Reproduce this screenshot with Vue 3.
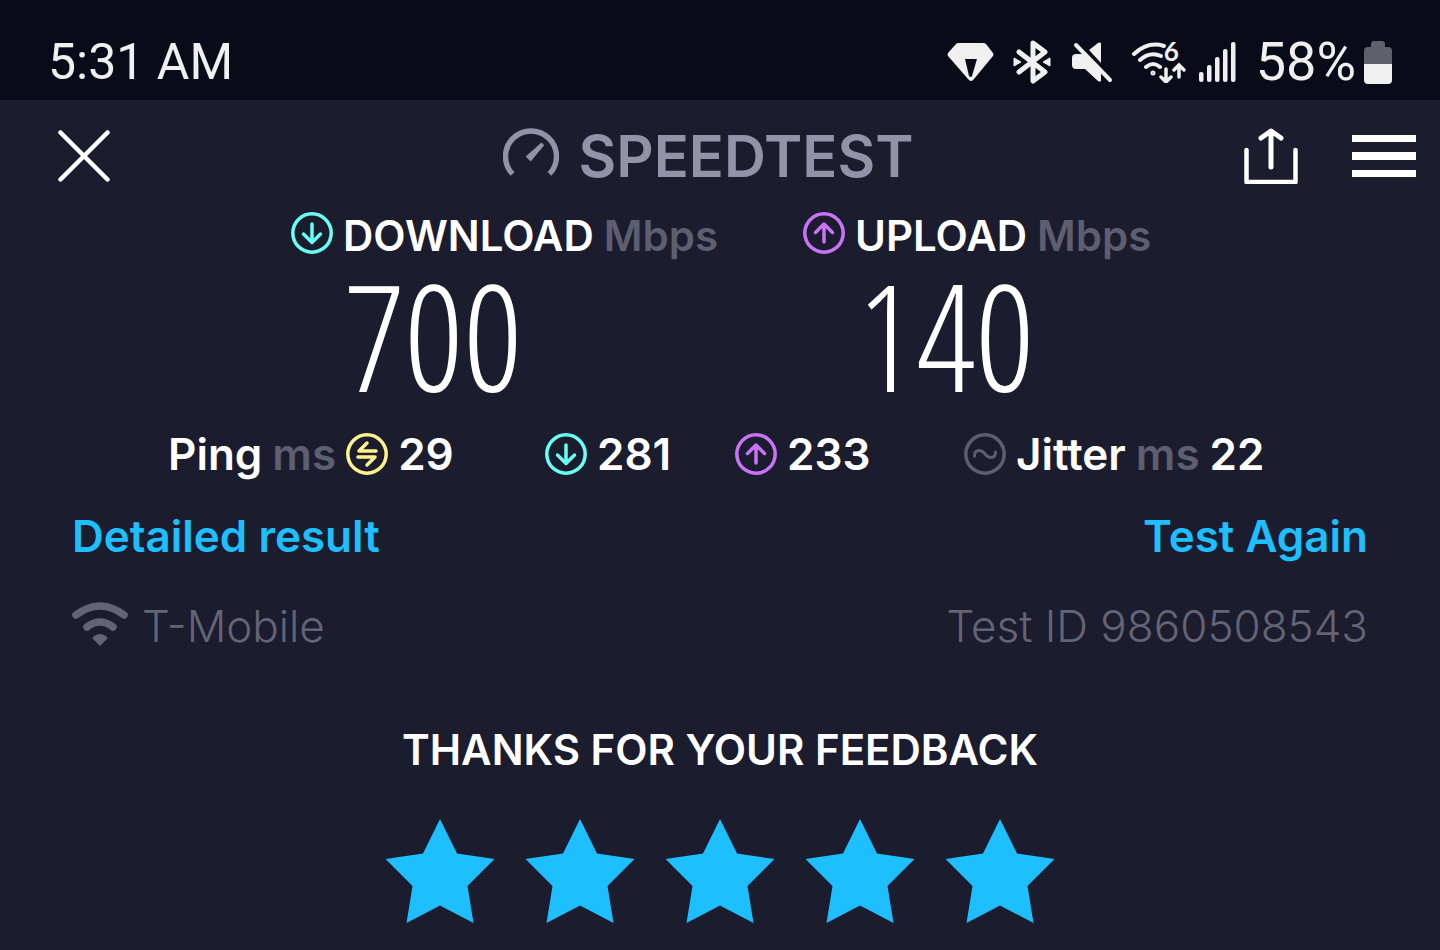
<script setup>
import { ref } from 'vue'

const rating = ref(5)

const results = [
  { label: 'DOWNLOAD', unit: 'Mbps', value: 700, dir: 'down' },
  { label: 'UPLOAD', unit: 'Mbps', value: 140, dir: 'up' },
]

const bars = [
  { x: 0, y: 31 },
  { x: 8, y: 24 },
  { x: 16, y: 16 },
  { x: 24, y: 8 },
  { x: 32, y: 1 },
]
</script>

<template>
  <div class="screen">
    <div class="status">
      <span class="clock">5:31 AM</span>
      <div class="tray">
        <!-- vpn / gem -->
        <svg class="gem" width="48" height="42" viewBox="0 0 48 42">
          <path d="M12 2h24q2 0 3 1l7 9q1 2 0 3L27 38q-3 4-6 0L1 15q-1-1 0-3l8-9q1-1 3-1z" fill="#f0f0f0" />
          <path d="M18 18h12l-5 17q-1 2-3 0z" fill="#090b18" />
        </svg>
        <svg class="bt" width="38" height="44" viewBox="0 0 38 44">
          <path d="M6 12l26 20-12 9V3l12 9L6 32" fill="none" stroke="#f0f0f0" stroke-width="5" stroke-linejoin="round" stroke-linecap="round" />
          <path d="M1 18l7 4-7 4zM37 18l-7 4 7 4z" fill="#f0f0f0" stroke="#f0f0f0" stroke-linejoin="round" />
        </svg>
        <svg class="mute" width="42" height="42" viewBox="0 0 42 42">
          <path d="M30 2v20L18 9l9-7q2-1 3 0zM5 13h8l17 17v10q-1 1-3 0L14 28H5q-4 0-4-4v-7q0-4 4-4z" fill="#f0f0f0" />
          <path d="M8 2l34 36" stroke="#090b18" stroke-width="3" />
          <path d="M5 4l34 35" stroke="#f0f0f0" stroke-width="4" stroke-linecap="round" />
        </svg>
        <div class="wifi6">
          <svg width="56" height="42" viewBox="0 0 56 42" fill="none" stroke="#f0f0f0" stroke-width="4" stroke-linecap="round">
            <path d="M3 13Q17 0 33 5M9 19q10-9 21-4M15 26q7-6 14 0" />
            <circle cx="22" cy="32" r="1" stroke-width="3" />
            <path d="M35 28v12M30 36l5 5 5-5M48 36V25M43 29l5-5 5 5" stroke-width="3.5" />
          </svg>
          <span class="six">6</span>
        </div>
        <svg class="signal" width="37" height="42" viewBox="0 0 37 42">
          <rect v-for="b in bars" :key="b.x" :x="b.x" :y="b.y" width="4.5" :height="41 - b.y" rx="2" fill="#f0f0f0" />
        </svg>
        <span class="percent">58%</span>
        <svg class="battery" width="28" height="43" viewBox="0 0 28 43">
          <path d="M7 3q0-3 3-3h8q3 0 3 3v3h3q4 0 4 4v13H0V10q0-4 4-4h3z" fill="#5f606c" />
          <path d="M0 23h28v16q0 4-4 4H4q-4 0-4-4z" fill="#f0f0f0" />
        </svg>
      </div>
    </div>

    <header class="bar">
      <button class="close" aria-label="Close">
        <svg width="52" height="52" viewBox="0 0 52 52">
          <path d="M2.5 2.5l47 47M49.5 2.5l-47 47" stroke="#fff" stroke-width="4.5" stroke-linecap="round" />
        </svg>
      </button>
      <div class="logo">
        <svg width="56" height="56" viewBox="0 0 56 56">
          <path d="M9.500 46A25.500 25.500 0 1 1 46.500 46" fill="none" stroke="#9293a8" stroke-width="5.400" />
          <path d="M38.500 14.500l2.700 2.700-13.500 16.300-5-5z" fill="#9293a8" />
        </svg>
        <h1>SPEEDTEST</h1>
      </div>
      <div class="actions">
        <button aria-label="Share">
          <svg width="54" height="56" viewBox="0 0 54 56" fill="none" stroke="#fff" stroke-width="5" stroke-linecap="round" stroke-linejoin="round">
            <path d="M2.500 22v32h49V22" stroke-width="4.500" />
            <path d="M27 39V3M17 10l10-7 10 7" />
          </svg>
        </button>
        <button aria-label="Menu">
          <svg width="64" height="42" viewBox="0 0 64 42" fill="#fff">
            <path d="M0 0h64v7H0zM0 17h64v8H0zM0 35h64v7H0z" />
          </svg>
        </button>
      </div>
    </header>

    <main>
      <section class="results">
        <div v-for="r in results" :key="r.label" class="result">
          <h2>
            <svg class="ring" :class="r.dir" viewBox="0 0 42 42">
              <circle cx="21" cy="21" r="19.2" />
              <path v-if="r.dir === 'down'" d="M21 12v18M12.5 22l8.5 8.5 8.5-8.5" />
              <path v-else d="M21 30V12M12.5 20.5l8.5-8.5 8.5 8.5" />
            </svg>
            {{ r.label }}
            <span class="unit">{{ r.unit }}</span>
          </h2>
          <p class="value">{{ r.value }}</p>
        </div>
      </section>

      <section class="latency">
        <div class="stat">
          <span>Ping</span>
          <span class="unit">ms</span>
          <svg class="ring idle" viewBox="0 0 42 42">
            <circle cx="21" cy="21" r="19.2" />
            <path d="M30 18H13l8-8M12 24h17l-8 8" />
          </svg>
          <span>29</span>
        </div>
        <div class="stat">
          <svg class="ring down" viewBox="0 0 42 42">
            <circle cx="21" cy="21" r="19.2" />
            <path d="M21 12v18M12.5 22l8.5 8.5 8.5-8.5" />
          </svg>
          <span>281</span>
        </div>
        <div class="stat">
          <svg class="ring up" viewBox="0 0 42 42">
            <circle cx="21" cy="21" r="19.2" />
            <path d="M21 30V12M12.5 20.5l8.5-8.5 8.5 8.5" />
          </svg>
          <span>233</span>
        </div>
        <div class="stat">
          <svg class="ring jitter" viewBox="0 0 42 42">
            <circle cx="21" cy="21" r="19.2" />
            <path d="M10.5 23c0-7 7-7 10.500-2s10.500 5 10.500-2" stroke-width="3" />
          </svg>
          <span>Jitter</span>
          <span class="unit">ms</span>
          <span>22</span>
        </div>
      </section>

      <nav class="row links">
        <a href="#details">Detailed result</a>
        <a href="#again">Test Again</a>
      </nav>

      <div class="row meta">
        <span class="provider">
          <svg width="56" height="48" viewBox="0 0 56 48">
            <path d="M4 13Q28-5 52 13M15 25q13-10 26 0" fill="none" stroke="#636476" stroke-width="7.500" stroke-linecap="round" />
            <path d="M21 35q7-6 14 0 1 1 0 2l-6 6q-1 1-2 0l-6-6q-1-1 0-2z" fill="#636476" />
          </svg>
          T-Mobile
        </span>
        <span>Test ID 9860508543</span>
      </div>

      <section class="feedback">
        <h2>THANKS FOR YOUR FEEDBACK</h2>
        <div class="stars">
          <button v-for="n in 5" :key="n" :class="{ on: n <= rating }" :aria-label="`${n} stars`" @click="rating = n">
            <svg width="110" height="104" viewBox="0 0 110 104">
              <path d="M55 0l17 34.500 37.500 5.500-27 27 6 37L55 86.500 21.500 104l6-37L.5 40 38 34.500z" />
            </svg>
          </button>
        </div>
      </section>
    </main>
  </div>
</template>

<style>
body {
  background: #1b1c2e;
}
</style>

<style scoped>
.screen {
  color: #fff;
  background: #1b1c2e;
  font-family: Inter, "Liberation Sans", sans-serif;
}

h1, h2, p { margin: 0; }
svg { display: block; flex: none; }

button {
  padding: 0;
  border: 0;
  background: none;
  cursor: pointer;
}

/* status bar */
.status {
  display: flex;
  justify-content: space-between;
  align-items: center;
  box-sizing: border-box;
  height: 100px;
  padding: 24px 48px 0;
  background: #090b18;
  color: #f0f0f0;
  font-family: Roboto, sans-serif;
  font-size: 50px;
  line-height: 60px;
}

.tray { display: flex; align-items: center; }
.bt { margin-left: 18px; }
.mute { margin-left: 20px; }
.wifi6 { position: relative; margin-left: 18px; }
.six {
  position: absolute;
  top: -4px;
  right: 8px;
  font: 700 26px/28px Lato, sans-serif;
}
.signal { margin-left: 12px; }
.percent { margin-left: 20px; font-size: 54px; }
.battery { margin-left: 8px; }

/* app bar */
.bar {
  display: grid;
  grid-template-columns: 1fr auto 1fr;
  align-items: center;
  height: 112px;
  padding-right: 24px;
}
.close { justify-self: start; margin-left: 58px; }
.logo {
  display: flex;
  align-items: center;
  gap: 20px;
  color: #9293a8;
}
.logo h1 { font-size: 58px; line-height: 64px; font-weight: 600; }
.actions {
  display: flex;
  align-items: center;
  justify-content: flex-end;
  gap: 54px;
}

.unit { color: #5d5e70; }

.ring {
  width: 42px;
  height: 42px;
  fill: none;
  stroke: currentColor;
  stroke-width: 3.5;
  stroke-linecap: round;
  stroke-linejoin: round;
}
.down { color: #6afff3; }
.up { color: #c874f5; }
.idle { color: #fff38e; }
.jitter { color: #5d5e70; }

/* download / upload */
.results {
  display: grid;
  grid-template-columns: 1fr 1fr;
  padding: 0 125px 0 291px;
}
.result h2 {
  display: flex;
  align-items: flex-start;
  gap: 10px;
  font-size: 42px;
  line-height: 48px;
  font-weight: 600;
}
.value {
  padding: 0 0 10px 54px;
  font-family: "Open Sans Condensed Light", "Open Sans Light Condensed", Roboto, sans-serif;
  font-size: 148px;
  line-height: 150px;
  font-weight: 300;
}

.latency {
  display: grid;
  grid-template-columns: 377fr 190fr 229fr 308fr;
  padding: 8px 168px 0;
  font-size: 44px;
  line-height: 52px;
  font-weight: 600;
}
.stat {
  display: flex;
  align-items: center;
  gap: 10px;
  white-space: nowrap;
}

.row {
  display: flex;
  justify-content: space-between;
  align-items: center;
  padding: 0 72px;
  font-size: 44px;
  line-height: 52px;
}
.links { margin-top: 30px; font-weight: 600; }
.links a { color: #1dbfff; text-decoration: none; }

.meta {
  margin-top: 38px;
  color: #636476;
  font-weight: 300;
}
.provider {
  display: flex;
  align-items: center;
  gap: 14px;
}

.feedback { text-align: center; }
.feedback h2 {
  margin-top: 72px;
  font-size: 42px;
  line-height: 52px;
  font-weight: 600;
}
.stars {
  display: flex;
  justify-content: center;
  gap: 30px;
  margin-top: 43px;
  padding-bottom: 24px;
  fill: #3a3b4e;
}
.stars .on { fill: #1dbfff; }
</style>
